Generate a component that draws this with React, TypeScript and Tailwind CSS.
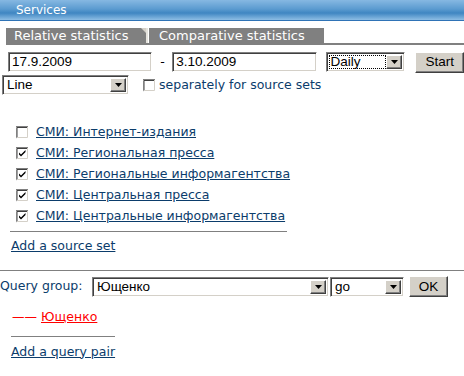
import React from "react";

const inset =
  "border border-t-[#808080] border-l-[#808080] border-b-white border-r-white shadow-[inset_1px_1px_0_#404040,inset_-1px_-1px_0_#d4d0c8]";
const raised =
  "border border-t-white border-l-white border-b-[#404040] border-r-[#404040] shadow-[inset_-1px_-1px_0_#808080,inset_1px_1px_0_#d4d0c8]";

function Arrow() {
  return (
    <div className={`w-[16px] h-full bg-[#d4d0c8] flex items-center justify-center shrink-0 ${raised}`}>
      <svg width="7" height="4" viewBox="0 0 7 4">
        <polygon points="0,0 7,0 3.5,4" fill="#000" />
      </svg>
    </div>
  );
}

function Select({ value, className, focus }: { value: string; className: string; focus?: boolean }) {
  return (
    <div className={`flex bg-white p-[2px] ${inset} ${className}`}>
      <div className={`flex-1 flex items-center pl-[2px] ${focus ? "outline outline-1 outline-dotted outline-black -outline-offset-1" : ""}`}>
        <span className="font-['Liberation_Sans'] text-[13.5px] leading-none text-black">{value}</span>
      </div>
      <Arrow />
    </div>
  );
}

function Check({ checked }: { checked?: boolean }) {
  return (
    <svg width="13" height="13" viewBox="0 0 13 13" className="shrink-0">
      <rect x="0" y="0" width="13" height="13" fill="#fff" />
      <path d="M0 12.5V0.5H12.5" stroke="#808080" fill="none" />
      <path d="M1 11.5V1.5H11.5" stroke="#404040" fill="none" />
      <path d="M0.5 12.5H12.5V0" stroke="#fff" fill="none" />
      <path d="M1.5 11.5H11.5V1" stroke="#d4d0c8" fill="none" />
      {checked && <path d="M3 5.5 L5 7.5 L9.5 3 V5 L5 9.5 L3 7.5 Z" fill="#000" />}
    </svg>
  );
}

const sources: [string, boolean][] = [
  ["СМИ: Интернет-издания", false],
  ["СМИ: Региональная пресса", true],
  ["СМИ: Региональные информагентства", true],
  ["СМИ: Центральная пресса", true],
  ["СМИ: Центральные информагентства", true],
];

export default function App() {
  return (
    <div className="w-[464px] h-[376px] bg-white overflow-hidden font-['DejaVu_Sans'] text-[12.5px] text-[#0b3c6b] relative whitespace-nowrap">
      <div className="h-[21px] bg-[linear-gradient(#86b8e2,#5b9bd0_45%,#3f86c2_65%,#8dbde4)] border-b border-[#2f73b6] flex items-center pl-[16px]">
        <span className="text-white text-[12px] leading-none">Services</span>
      </div>
      <div className="mt-[7px] ml-[6px] flex border-b-2 border-[#808080] h-[17px]">
        <div className="bg-[#808080] text-white text-[13px] leading-none flex items-center pl-[8px] w-[135px]">
          Relative statistics
        </div>
        <svg width="8" height="15" viewBox="0 0 8 15" className="shrink-0">
          <rect width="8" height="15" fill="#808080" />
          <polygon points="0,0 5,0 5,5" fill="#d4d0c8" />
          <rect x="5" y="0" width="2" height="15" fill="#e4e2dc" />
          <rect x="7" y="0" width="1" height="15" fill="#fff" />
        </svg>
        <div className="bg-[#808080] text-white text-[13px] leading-none flex items-center pl-[10px] w-[175px]">
          Comparative statistics
        </div>
      </div>

      <div className="flex items-center mt-[7px] h-[20px]">
        <div className={`ml-[8px] w-[145px] h-full bg-white flex items-center pl-[3px] ${inset}`}>
          <span className="font-['Liberation_Sans'] text-[13.5px] leading-none text-black">17.9.2009</span>
        </div>
        <span className="ml-[8px] w-[11px] text-black">-</span>
        <div className={`ml-[1px] w-[145px] h-full bg-white flex items-center pl-[3px] ${inset}`}>
          <span className="font-['Liberation_Sans'] text-[13.5px] leading-none text-black">3.10.2009</span>
        </div>
        <Select value="Daily" className="ml-[9px] w-[80px] h-full" focus />
        <button className={`ml-[10px] w-[49px] h-[21px] bg-[#d4d0c8] ${raised} font-['Liberation_Sans'] text-[13.5px] text-black leading-none`}>
          Start
        </button>
      </div>

      <div className="flex items-center mt-[3px] h-[20px]">
        <Select value="Line" className="ml-[2px] w-[127px] h-full" />
        <div className="ml-[14px]">
          <Check />
        </div>
        <span className="ml-[3px]">separately for source sets</span>
      </div>

      <div className="mt-[27px] ml-[10px] w-[277px] border-b border-[#808080] pb-[4px]">
        {sources.map(([name, c]) => (
          <div key={name} className="flex items-center h-[21px] pl-[6px]">
            <Check checked={c} />
            <a className="ml-[7px] underline cursor-pointer">{name}</a>
          </div>
        ))}
      </div>
      <div className="ml-[11px] mt-[5px]">
        <a className="underline">Add a source set</a>
      </div>

      <div className="mt-[14px] border-t border-[#808080]" />

      <div className="flex items-center mt-[6px] h-[20px]">
        <span className="w-[92px]">Query group:</span>
        <Select value="Ющенко" className="w-[237px] h-full" />
        <Select value="go" className="ml-[1px] w-[74px] h-full" />
        <button className={`ml-[5px] w-[39px] h-[21px] bg-[#d4d0c8] ${raised} font-['Liberation_Sans'] text-[13.5px] text-black leading-none`}>
          OK
        </button>
      </div>

      <div className="ml-[12px] mt-[11px] text-[#ff0000] flex items-center">
        <span>——</span>
        <a className="ml-[4px] underline">Ющенко</a>
      </div>
      <div className="ml-[11px] mt-[9px] w-[104px] border-t border-[#808080]" />
      <div className="ml-[11px] mt-[6px]">
        <a className="underline">Add a query pair</a>
      </div>
    </div>
  );
}
